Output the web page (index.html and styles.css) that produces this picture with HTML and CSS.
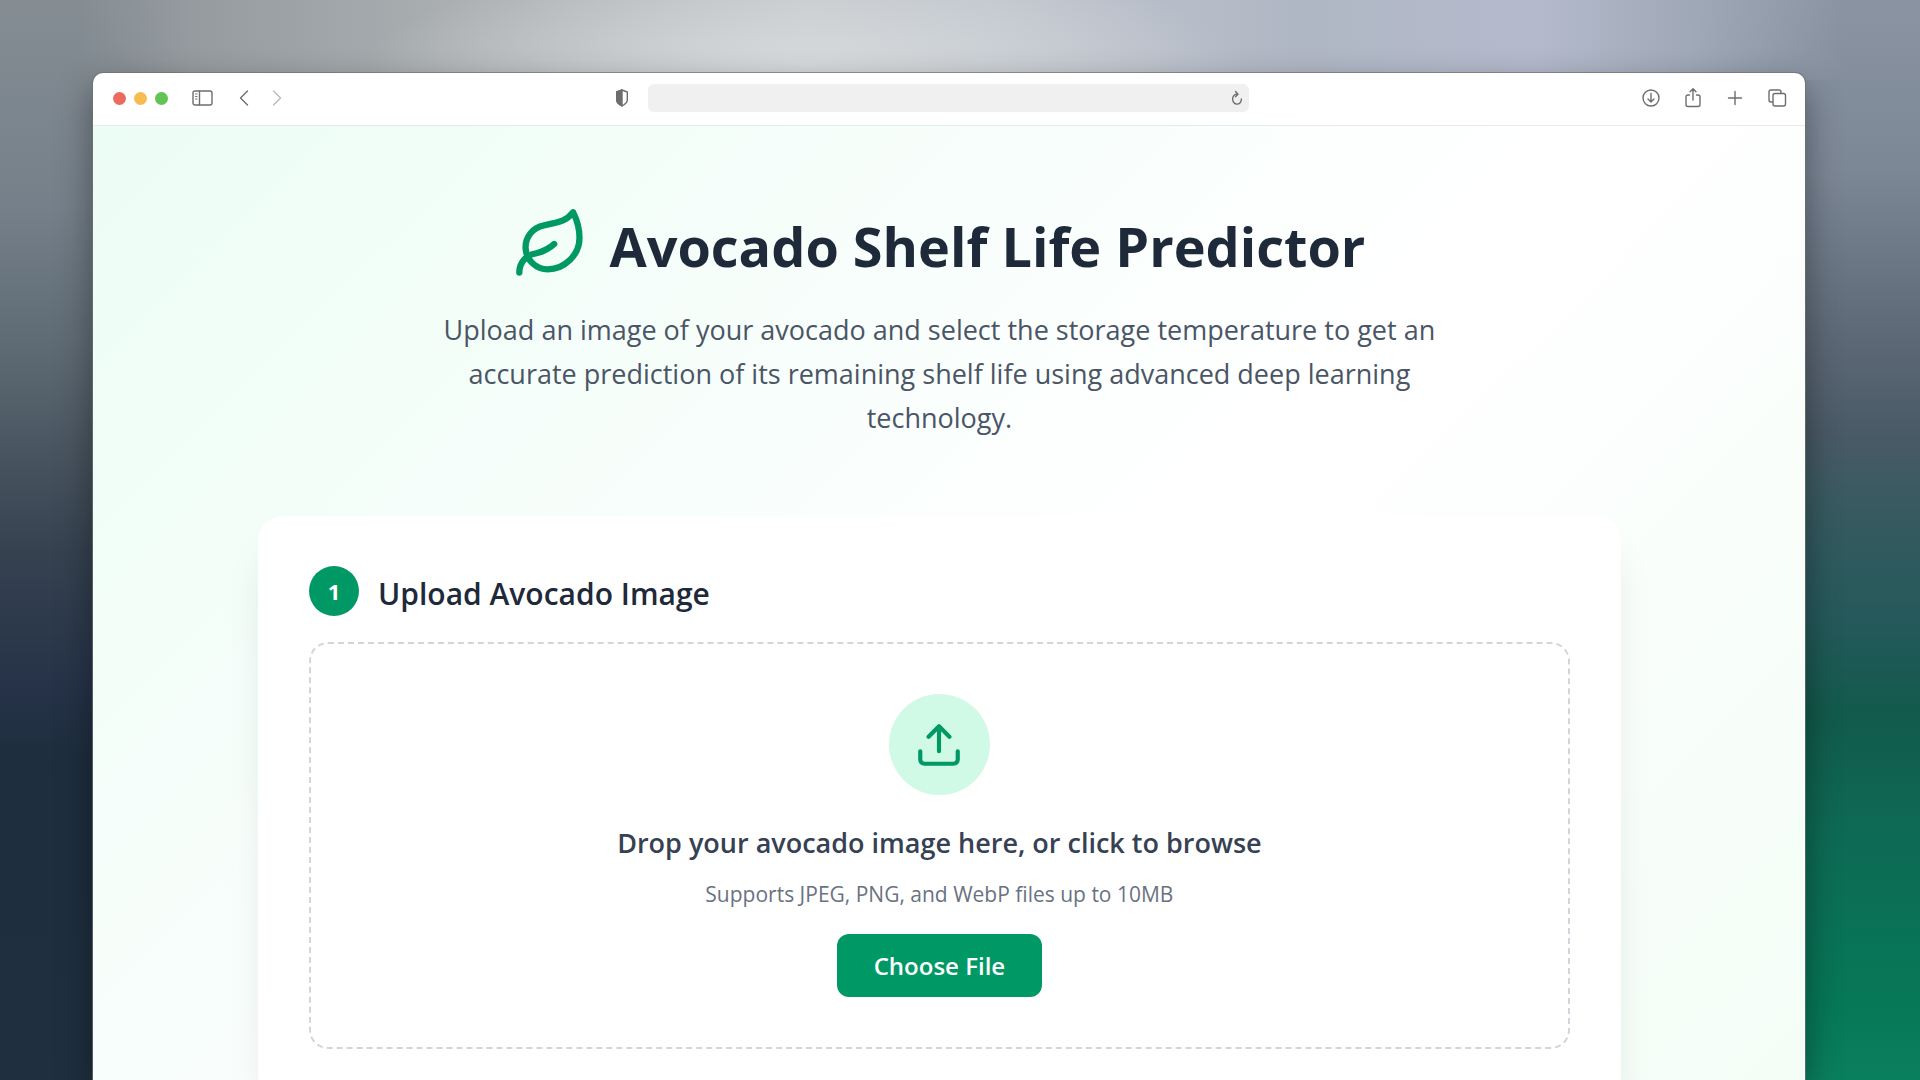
FILE: index.html
```html
<!DOCTYPE html>
<html lang="en">
<head>
<meta charset="utf-8">
<title>Avocado Shelf Life Predictor</title>
<link rel="stylesheet" href="styles.css">
</head>
<body>
<div class="window">
  <header class="toolbar">
    <div class="tools tools-left">
      <div class="lights"><span class="light red"></span><span class="light amber"></span><span class="light green"></span></div>
      <button class="tool sidebar" aria-label="Sidebar"><svg width="22" height="18" viewBox="0 0 22 18"><rect x="1" y="2" width="19" height="14" rx="2"/><path d="M7.500 2v14"/><path class="fine" d="M3.500 5H5M3.500 7.500H5M3.500 10H5"/></svg></button>
      <div class="history">
        <button class="tool" aria-label="Back"><svg width="12" height="18" viewBox="0 0 12 18"><path d="M9.500 2 2.500 9l7 7"/></svg></button>
        <button class="tool dim" aria-label="Forward"><svg width="12" height="18" viewBox="0 0 12 18"><path d="m2.500 2 7 7-7 7"/></svg></button>
      </div>
    </div>
    <div class="address">
      <button class="tool" aria-label="Privacy report"><svg width="14" height="20" viewBox="0 0 14 20"><path d="M7 2 12.300 4v8c0 2.500-2.500 4.500-5.300 6-2.800-1.500-5.300-3.500-5.300-6V4z"/><path class="solid" d="M7 2v16c-2.800-1.500-5.300-3.500-5.300-6V4z"/></svg></button>
      <div class="field">
        <input class="url" type="text" aria-label="Address">
        <button class="tool reload" aria-label="Reload"><svg width="12" height="16" viewBox="0 0 12 16"><path d="M6.500 4.200A4.400 5 0 1 0 10.400 9M4.500 1.500l2.500 2.700-2.500 2.500"/></svg></button>
      </div>
    </div>
    <div class="tools tools-right">
      <button class="tool" aria-label="Downloads"><svg width="20" height="20" viewBox="0 0 20 20"><circle cx="10" cy="10" r="8"/><path d="M10 5.500v8.500M7 11l3 3 3-3"/></svg></button>
      <button class="tool" aria-label="Share"><svg width="20" height="22" viewBox="0 0 20 22"><path d="M6.500 8H5a2 2 0 0 0-2 2v7.500a2 2 0 0 0 2 2h10a2 2 0 0 0 2-2V10a2 2 0 0 0-2-2h-1.500M10 13V2M7 4.700 10 1.700l3 3"/></svg></button>
      <button class="tool" aria-label="New tab"><svg width="20" height="20" viewBox="0 0 20 20"><path d="M10 3.500v13M3.500 10h13"/></svg></button>
      <button class="tool" aria-label="Tab overview"><svg width="20" height="20" viewBox="0 0 20 20"><path d="M5.500 14H4a2 2 0 0 1-2-2V4a2 2 0 0 1 2-2h8a2 2 0 0 1 2 2v1.500"/><rect x="6" y="5.500" width="12.500" height="12.500" rx="2"/></svg></button>
    </div>
  </header>
  <main class="page">
    <section class="hero">
      <div class="brand">
        <svg class="leaf" viewBox="0 0 24 24"><path d="M11 20A7 7 0 0 1 9.800 6.100C15.500 5 17 4.480 19 2c1 2 2 4.180 2 8 0 5.500-4.780 10-10 10Z"/><path d="M2 21c0-3 1.850-5.360 5.080-6C9.500 14.520 12 13 13 12"/></svg>
        <h1 class="title">Avocado Shelf Life Predictor</h1>
      </div>
      <p class="lead">Upload an image of your avocado and select the storage temperature to get an accurate prediction of its remaining shelf life using advanced deep learning technology.</p>
    </section>
    <section class="card">
      <div class="step">
        <span class="number">1</span>
        <h2 class="step-title">Upload Avocado Image</h2>
      </div>
      <div class="drop">
        <div class="badge"><svg class="upload" viewBox="0 0 24 24"><path d="M21 15v4a2 2 0 0 1-2 2H5a2 2 0 0 1-2-2v-4M17 8l-5-5-5 5M12 3v12"/></svg></div>
        <p class="prompt">Drop your avocado image here, or click to browse</p>
        <p class="hint">Supports JPEG, PNG, and WebP files up to 10MB</p>
        <button class="choose">Choose File</button>
      </div>
    </section>
  </main>
</div>
</body>
</html>
```
FILE: styles.css
```css
* { box-sizing: border-box; }

body {
  margin: 0;
  height: 100vh;
  overflow: hidden;
  padding: 73px 6% 0 93px;
  font-family: "Open Sans", "Noto Sans", sans-serif;
  background:
    radial-gradient(440px 110px at 42% 66px, rgba(216, 220, 222, .9), transparent) no-repeat,
    linear-gradient(90deg, transparent 4%, #959b9f 10%, #adb1b4 25%, #c4c8cb 42%, #bfc4cd 52%, #b0b7c4 68%, #b4bacc 80%, #a0a9b7 88%, transparent 96%) top / 100% 80px no-repeat,
    linear-gradient(180deg, #8a94a3 0%, #7c8796 16%, #5c6775 32%, #4a5a67 40%, #355a60 48%, #24595a 58%, #125a4c 66%, #0e6a55 77%, #067857 93%, #0a7f5e 100%) right / 50% 100% no-repeat,
    linear-gradient(180deg, #858d93 0%, #75808a 19%, #5f6b74 32%, #48545f 42%, #364250 51%, #253248 64%, #1e2e3e 70%, #1f2f3f 100%) left / 50% 100% no-repeat;
}

.window {
  display: flex;
  flex-direction: column;
  height: 100%;
  border-radius: 10px 10px 0 0;
  overflow: hidden;
  background: #fff;
  box-shadow: 0 0 0 1px rgba(110, 112, 112, .7), 0 14px 36px rgba(0, 0, 0, .4);
}

.toolbar {
  display: grid;
  grid-template-columns: 1fr 667px 1fr;
  align-items: center;
  flex: none;
  height: 53px;
  padding-bottom: 2px;
  border-bottom: 1px solid #e6ecea;
}

.tools { display: flex; align-items: center; }
.tools-left { padding-left: 20px; gap: 24px; }
.tools-right { justify-content: flex-end; padding-right: 18px; gap: 22px; }
.lights { display: flex; gap: 8px; }
.light { width: 13px; height: 13px; border-radius: 50%; }
.red { background: #ed6a5f; }
.amber { background: #f5bd4f; }
.green { background: #61c455; }
.history { display: flex; gap: 21px; }

.tool {
  display: flex;
  padding: 0;
  border: 0;
  background: none;
  color: #6e6e6e;
}
.tool svg {
  fill: none;
  stroke: currentColor;
  stroke-width: 1.4;
  stroke-linecap: round;
  stroke-linejoin: round;
}
.tool .solid { fill: currentColor; }
.tool .fine { stroke-width: 1; }
.dim { color: #b9b9b9; }

.address { display: flex; align-items: center; gap: 19px; padding-right: 33px; }
.field {
  display: flex;
  align-items: center;
  flex: 1;
  height: 28px;
  padding-right: 6px;
  border-radius: 6px;
  background: #f0f0f0;
}
.url { flex: 1; border: 0; background: none; outline: 0; }

.page {
  display: flex;
  flex-direction: column;
  flex: 1;
  padding: 78px 184px 0 165px;
  background: linear-gradient(135deg, #ecfdf5 0%, #fff 50%, #f0fdf4 100%) top / 100% 1300px;
}

.hero { text-align: center; }
.brand { display: flex; justify-content: center; align-items: center; gap: 20px; }
.leaf { width: 76px; height: 76px; }
.leaf, .upload {
  fill: none;
  stroke: #009966;
  stroke-width: 2;
  stroke-linecap: round;
  stroke-linejoin: round;
}
.title { margin: 0; padding-top: 4px; font-size: 54px; line-height: 76px; font-weight: 700; color: #1e2939; }
.lead {
  max-width: 1040px;
  margin: 24px auto 0;
  font-size: 27px;
  line-height: 44px;
  color: #4a5565;
}

.card {
  flex: 1;
  margin-top: 76px;
  padding: 50px 51px 0;
  border-radius: 25px 25px 0 0;
  background: #fff;
  box-shadow: 0 32px 40px -8px rgba(0, 0, 0, .1);
}
.step { display: flex; align-items: flex-start; gap: 19px; }
.number {
  width: 50px;
  border-radius: 50%;
  background: #009966;
  color: #fff;
  font-size: 22px;
  line-height: 50px;
  font-weight: 700;
  text-align: center;
}
.step-title { margin: 0; padding-top: 3px; font-size: 30px; line-height: 50px; font-weight: 600; color: #1e2939; }

.drop {
  display: flex;
  flex-direction: column;
  align-items: center;
  margin-top: 23px;
  padding: 50px;
  border: 2px dashed #d1d5dc;
  border-radius: 19px;
}
.badge {
  display: grid;
  place-items: center;
  width: 101px;
  height: 101px;
  border-radius: 50%;
  background: #d0fae5;
}
.upload { width: 50px; height: 50px; }
.prompt { margin: 26px 0 0; font-size: 27px; line-height: 44px; font-weight: 600; color: #364153; }
.hint { margin: 11px 0 0; font-size: 21px; line-height: 36px; color: #6a7282; }
.choose {
  margin-top: 22px;
  padding: 0 37px;
  border: 0;
  border-radius: 12px;
  background: #009966;
  color: #fff;
  font: 600 24px/63px "Open Sans", "Noto Sans", sans-serif;
}
```
